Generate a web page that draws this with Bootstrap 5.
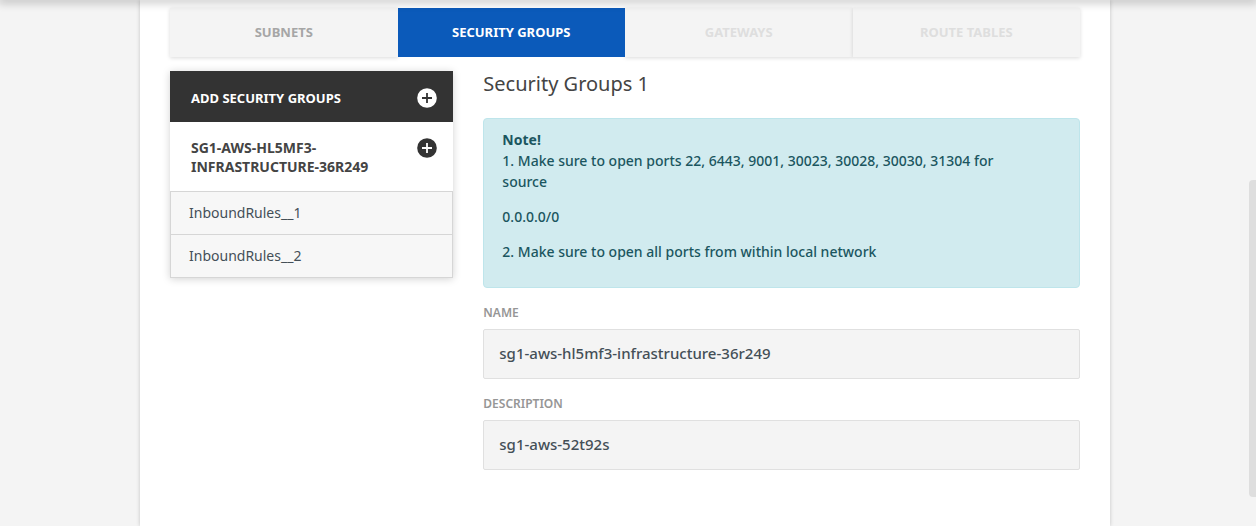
<!DOCTYPE html>
<html lang="en">
<head>
<meta charset="utf-8">
<meta name="viewport" content="width=device-width, initial-scale=1">
<title>Security Groups</title>
<link href="https://cdn.jsdelivr.net/npm/bootstrap@5.3.0/dist/css/bootstrap.min.css" rel="stylesheet">
<style>
  body { padding-right: 6px; background: #f4f4f4; color: #444; font-family: "Noto Sans", "Open Sans", sans-serif; font-size: 14px; line-height: 21px; font-weight: 500; }
  .header-shade { height: 1px; margin-top: -1px; box-shadow: 0 0 10px 2px rgba(0,0,0,.32); z-index: 20; }
  .page-sheet { max-width: 970px; padding: 8px 30px 30px; background: #fff; box-shadow: 0 0 4px rgba(0,0,0,.2); }
  .step-tabs { height: 49px; margin-bottom: 14px; }
  .step-tabs .nav-link { height: 100%; padding: 0; border-radius: 0; background: #f4f4f4; color: #a6a6a6; font-size: 13px; font-weight: 700; text-transform: uppercase; box-shadow: 0 1px 4px rgba(0,0,0,.15); }
  .step-tabs .nav-item:nth-child(2) { z-index: 1; }
  .step-tabs .nav-link.active { background: #0b5aba; color: #fff; box-shadow: none; }
  .step-tabs .nav-link.disabled { color: #dedede; }
  .split { --bs-gutter-x: 30px; }
  .side-panel { background: #fff; box-shadow: 0 1px 8px rgba(0,0,0,.18); }
  .side-head { padding: 16px 16px 15px 21px; font-size: 13px; font-weight: 700; line-height: 19px; text-transform: uppercase; }
  .side-title { padding-top: 17px; padding-bottom: 14px; background: #333; color: #fff; }
  .side-group { font-size: 14px; }
  .plus-btn { width: 20px; height: 20px; flex: none; color: inherit; }
  .side-group .plus-btn { color: #333; }
  .rules { --bs-list-group-border-color: #d6d6d6; --bs-list-group-border-radius: 0; --bs-list-group-bg: #f7f7f7; --bs-list-group-color: #444f57; font-weight: 400; }
  .rules .list-group-item { padding: 10px 18px 11px; }
  .group-title { font-size: 20px; line-height: 26px; margin-bottom: 21px; font-weight: 400; }
  .note-box { padding: 10px 50px 11px 18px; margin-bottom: 14px; background: #d1ebef; border: 1px solid #bee5eb; border-radius: 4px; color: #1b565f; }
  .note-box p { margin-bottom: 14px; }
  .field-label { display: block; margin-bottom: 6px; font-size: 12px; line-height: 21px; font-weight: 600; color: #969696; text-transform: uppercase; }
  .field-input { height: 50px; padding: 0 15px 2px; background: #f4f4f4; border-color: #e0e0e0; border-radius: 2px; color: #444f57; font-size: 15px; font-weight: 500; }
  .field-group { margin-bottom: 14px; }
  .scroll-thumb { right: 0; top: 34.2%; width: 7px; height: 60.3%; border-radius: 4px 0 0 4px; background: #dedede; }
</style>
</head>
<body>
<div class="header-shade position-fixed top-0 start-0 end-0"></div>
<main class="page-sheet mx-auto min-vh-100">
  <ul class="nav nav-justified flex-nowrap step-tabs">
    <li class="nav-item"><a class="nav-link d-flex align-items-center justify-content-center" href="#subnets">Subnets</a></li>
    <li class="nav-item"><a class="nav-link active d-flex align-items-center justify-content-center" aria-current="page" href="#groups">Security Groups</a></li>
    <li class="nav-item"><a class="nav-link disabled d-flex align-items-center justify-content-center" href="#gateways">Gateways</a></li>
    <li class="nav-item"><a class="nav-link disabled d-flex align-items-center justify-content-center" href="#routes">Route Tables</a></li>
  </ul>
  <div class="row split">
    <aside class="col-4">
      <div class="side-panel">
        <div class="side-head side-title d-flex justify-content-between align-items-end">
          <span>Add security groups</span>
          <button type="button" class="plus-btn btn p-0 border-0 d-flex" aria-label="Add security group"><svg width="20" height="20" viewBox="0 0 20 20"><circle cx="10" cy="10" r="9.8" fill="currentColor"/><path d="M10 5v10M5 10h10" stroke="#333" stroke-width="1.8"/></svg></button>
        </div>
        <div class="side-head side-group d-flex justify-content-between">
          <span>sg1-aws-hl5mf3-<br>infrastructure-36r249</span>
          <button type="button" class="plus-btn btn p-0 border-0 d-flex" aria-label="Add inbound rule"><svg width="20" height="20" viewBox="0 0 20 20"><circle cx="10" cy="10" r="9.8" fill="currentColor"/><path d="M10 5v10M5 10h10" stroke="#fff" stroke-width="1.8"/></svg></button>
        </div>
        <div class="list-group rules">
          <a class="list-group-item" href="#rule1">InboundRules__1</a>
          <a class="list-group-item" href="#rule2">InboundRules__2</a>
        </div>
      </div>
    </aside>
    <section class="col-8">
      <h1 class="group-title">Security Groups 1</h1>
      <div class="note-box" role="note">
        <strong>Note!</strong>
        <p>1. Make sure to open ports 22, 6443, 9001, 30023, 30028, 30030, 31304 for source</p>
        <p>0.0.0.0/0</p>
        <p>2. Make sure to open all ports from within local network</p>
      </div>
      <div class="field-group">
        <label class="field-label" for="sg-name">Name</label>
        <input class="form-control field-input" id="sg-name" type="text" value="sg1-aws-hl5mf3-infrastructure-36r249">
      </div>
      <div class="field-group">
        <label class="field-label" for="sg-desc">Description</label>
        <input class="form-control field-input" id="sg-desc" type="text" value="sg1-aws-52t92s">
      </div>
    </section>
  </div>
</main>
<div class="scroll-thumb position-fixed"></div>
<script src="https://cdn.jsdelivr.net/npm/bootstrap@5.3.0/dist/js/bootstrap.bundle.min.js"></script>
</body>
</html>
